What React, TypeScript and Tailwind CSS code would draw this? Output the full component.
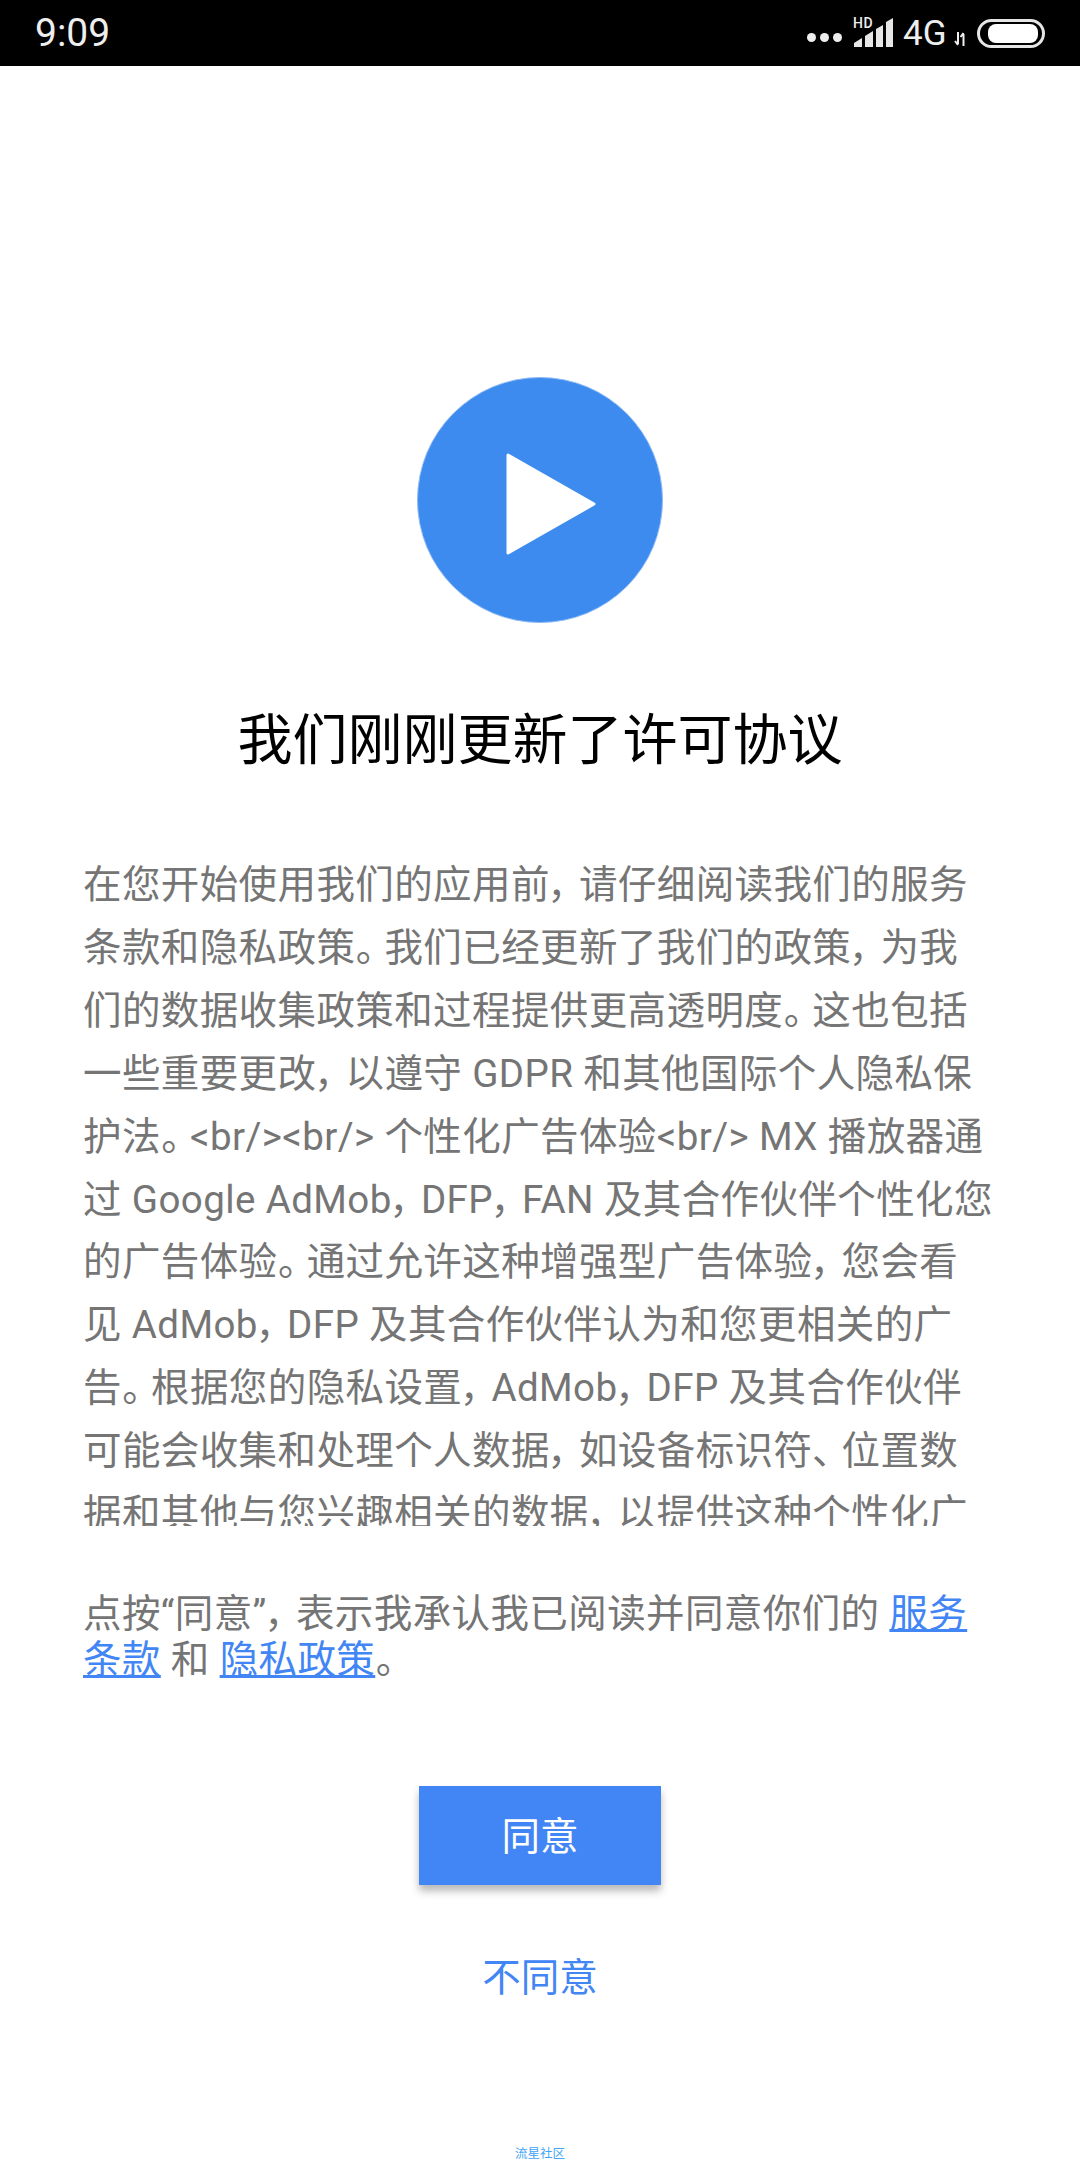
const bodyLines = [
  '在您开始使用我们的应用前，请仔细阅读我们的服务',
  '条款和隐私政策。我们已经更新了我们的政策，为我',
  '们的数据收集政策和过程提供更高透明度。这也包括',
  '一些重要更改，以遵守 GDPR 和其他国际个人隐私保',
  '护法。<br/><br/> 个性化广告体验<br/> MX 播放器通',
  '过 Google AdMob，DFP，FAN 及其合作伙伴个性化您',
  '的广告体验。通过允许这种增强型广告体验，您会看',
  '见 AdMob，DFP 及其合作伙伴认为和您更相关的广',
  '告。根据您的隐私设置，AdMob，DFP 及其合作伙伴',
  '可能会收集和处理个人数据，如设备标识符、位置数',
  '据和其他与您兴趣相关的数据，以提供这种个性化广',
];

// punctuation in the reference font sits a bit wider than palt gives
const Spaced = ({ text }: { text: string }) => (
  <>
    {text.split(/([，。、])/).map((part, i) =>
      /^[，。、]$/.test(part) ? (
        <span key={i} className="mr-[9.5px]">{part}</span>
      ) : (
        <span key={i}>{part}</span>
      )
    )}
  </>
);

const StatusBar = () => (
  <div className="h-[66px] shrink-0 bg-black flex items-center justify-between pl-[35px] pr-[35px] text-[#eeeeee]">
    <span className="text-[39px] font-[Roboto,sans-serif] leading-none">9:09</span>
    <div className="flex items-center">
      {/* three dots */}
      <div className="flex gap-[4px] mt-[9px]">
        <div className="w-[9px] h-[9px] rounded-full bg-[#eeeeee]" />
        <div className="w-[9px] h-[9px] rounded-full bg-[#eeeeee]" />
        <div className="w-[9px] h-[9px] rounded-full bg-[#eeeeee]" />
      </div>
      {/* signal */}
      <div className="relative ml-[12px] w-[39px] h-[29px] mt-[-1px]">
        <span className="absolute left-[-1px] top-[-2px] text-[14px] leading-[14px] font-medium font-[Roboto,sans-serif] tracking-[0.5px]">HD</span>
        <svg width="39" height="29" viewBox="0 0 39 29" className="absolute left-0 top-0">
          <path d="M0 29 V25 L8 20 V29 Z" fill="#e6e6e6" />
          <path d="M11 29 V18 L19 13 V29 Z" fill="#e6e6e6" />
          <path d="M22 29 V11 L29 7 V29 Z" fill="#e6e6e6" />
          <path d="M32 29 V4 L39 0 V29 Z" fill="#e6e6e6" />
        </svg>
      </div>
      <span className="ml-[10px] w-[45px] text-[35px] leading-none font-[Roboto,sans-serif] font-normal">4G</span>
      <svg width="13" height="14" viewBox="0 0 13 14" className="ml-[6px] mt-[12px]">
        <path d="M4 0 V12 M1 9 L4 13 M9.5 14 V2 M6.5 5 L9.5 1" stroke="#eeeeee" strokeWidth="2" fill="none" />
      </svg>
      <div className="ml-[10px] w-[68px] h-[29px] rounded-full border-[3px] border-[#e6e6e6] pl-[8px] pr-[4px] py-[2px]">
        <div className="w-full h-full rounded-[8px] bg-white" />
      </div>
    </div>
  </div>
);

export default function App() {
  return (
    <div className="relative w-[1080px] h-[2160px] overflow-hidden bg-white flex flex-col font-['Roboto','Noto_Sans_CJK_SC',sans-serif]">
      <StatusBar />

      <div className="flex justify-center mt-[311px]">
        <svg width="246" height="246" viewBox="0 0 246 246">
          <circle cx="123" cy="123" r="122.5" fill="#3d8bef" stroke="#8fbcf5" strokeWidth="1" />
          <path d="M91 78 L177 127 L91 176 Z" fill="#ffffff" stroke="#ffffff" strokeWidth="3" strokeLinejoin="round" />
        </svg>
      </div>

      <h1 className="mt-[84px] text-center text-[55px] leading-[66px] font-normal text-black [font-feature-settings:'palt']">
        我们刚刚更新了许可协议
      </h1>

      <div className="mt-[81px] pl-[83px] h-[672px] overflow-hidden text-[38.5px] leading-[62.9px] tracking-[0.4px] text-[#757575] whitespace-nowrap [font-feature-settings:'palt']">
        {bodyLines.map((line) => (
          <div key={line}>
            <Spaced text={line} />
          </div>
        ))}
      </div>

      <p className="mt-[65px] pl-[83px] text-[38.5px] leading-[46px] tracking-[0.4px] text-[#757575] whitespace-nowrap [font-feature-settings:'palt']">
        点按“同意”<span className="mr-[9.5px]">，</span>表示我承认我已阅读并同意你们的 <a className="text-[#4285f4] underline">服务</a>
        <br />
        <a className="text-[#4285f4] underline">条款</a> 和 <a className="text-[#4285f4] underline">隐私政策</a>。
      </p>

      <div className="flex justify-center mt-[103px]">
        <button className="w-[242px] h-[99px] pt-[3px] bg-[#4285f4] text-white text-[38.5px] shadow-[0_6px_8px_rgba(0,0,0,0.28)]">
          同意
        </button>
      </div>

      <div className="flex justify-center mt-[68px]">
        <button className="text-[#4285f4] text-[38.5px] leading-[50px]">不同意</button>
      </div>

      <div className="absolute bottom-[-2px] inset-x-0 text-center text-[12.5px] leading-[16px] text-[#42a5f5]">流星社区</div>
    </div>
  );
}
